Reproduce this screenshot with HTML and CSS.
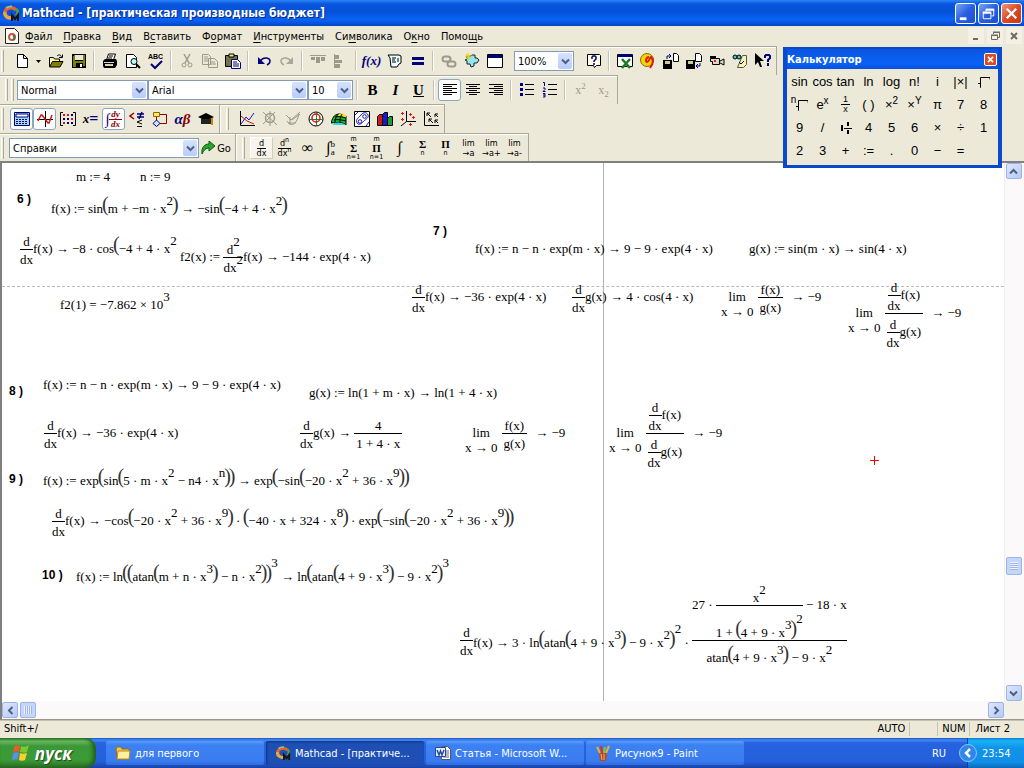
FILE: index.html
```html
<!DOCTYPE html>
<html lang="ru">
<head>
<meta charset="utf-8">
<title>Mathcad - [практическая производные бюджет]</title>
<link rel="stylesheet" href="styles.css">
</head>
<body>
<svg class="defs" aria-hidden="true">
  <symbol id="chev" viewBox="0 0 9 7"><path d="M1 1.500l3.500 3.500L8 1.500" fill="none" stroke="#4d6185" stroke-width="2"/></symbol>
  <symbol id="logo" viewBox="0 0 18 18"><path d="M3 9a6 5 0 0 1 11-3" fill="none" stroke="#e8602c" stroke-width="3.500"/><path d="M14 5a6 5 0 0 1 0 7" fill="none" stroke="#4f9a4a" stroke-width="3"/><path d="M3 8a6 5 0 0 0 7 6" fill="none" stroke="#e9a83c" stroke-width="3.500"/><path d="M4 4a7 5 0 0 1 6-1.500" fill="none" stroke="#8fc08a" stroke-width="2"/><path d="M10 17v-6l3 4 3-4v6" fill="none" stroke="#1a1210" stroke-width="2"/></symbol>
  <symbol id="disk" viewBox="0 0 16 16"><path d="M1 1h14v14H1z" fill="#000"/><path d="M3 2h1v6h8V2h2v11h-2v-3H5v4H2V3h1z" fill="#808000"/><path d="M4 2h8v5H4z" fill="#e8e6d8"/><path d="M9 11h2v3H9z" fill="#fff"/></symbol>
</svg>

<header class="titlebar">
  <svg class="app-icon"><use href="#logo"/></svg>
  <h1>Mathcad - [практическая производные бюджет]</h1>
  <div class="winbtns">
    <button aria-label="Свернуть"><svg viewBox="0 0 20 20"><path d="M4 14h7v3H4z" fill="#fff"/></svg></button>
    <button aria-label="Восстановить"><svg viewBox="0 0 20 20"><path d="M7.500 8V5.500h8v7H13M4.500 9.500h8v6h-8z" fill="none" stroke="#fff"/><path d="M7 5h9v2H7zM4 8h9v2H4z" fill="#fff"/></svg></button>
    <button class="close" aria-label="Закрыть"><svg viewBox="0 0 20 20"><path d="M5 5l10 10M15 5L5 15" stroke="#fff" stroke-width="2.500"/></svg></button>
  </div>
</header>

<nav class="menubar">
  <svg class="doc-icon" viewBox="0 0 16 18"><path d="M1.500 1.500h9l4 4v11h-13z" fill="#fff" stroke="#222"/><circle cx="8" cy="10" r="3" fill="none" stroke="#c75a3a" stroke-width="2"/><path d="M9 8a3 3 0 0 1 0 5" fill="none" stroke="#3c7a4a" stroke-width="2"/></svg>
  <button><u>Ф</u>айл</button><button><u>П</u>равка</button><button><u>В</u>ид</button><button>В<u>с</u>тавить</button><button>Ф<u>о</u>рмат</button><button><u>И</u>нструменты</button><button>Си<u>м</u>волика</button><button>О<u>к</u>но</button><button>Помо<u>щ</u>ь</button>
  <div class="mdi">
    <button aria-label="Свернуть документ"><svg viewBox="0 0 14 14"><path d="M4 9h5v2H4z" fill="#6d6a60"/></svg></button>
    <button aria-label="Восстановить документ"><svg viewBox="0 0 14 14"><path d="M5.500 5V3.500h6v5H10M3.500 6.500h6v4h-6zM3 6h7M5 3h7" fill="none" stroke="#6d6a60"/></svg></button>
    <button aria-label="Закрыть документ"><svg viewBox="0 0 14 14"><path d="M4 4l6 6M10 4l-6 6" stroke="#6d6a60" stroke-width="2"/></svg></button>
  </div>
</nav>

<div class="toolbar w1">
  <span class="grip"></span>
  <button aria-label="Создать"><svg viewBox="0 0 16 16"><path d="M3.500 1.500h6l4 4v9h-10zM9.500 1.500v4h4" fill="#fff" stroke="#000"/></svg></button>
  <button class="drop" aria-label="Шаблоны"><svg viewBox="0 0 5 5"><path d="M0 1h5L2.500 4z"/></svg></button>
  <button aria-label="Открыть"><svg viewBox="0 0 16 16"><path d="M1.500 13.500v-9h4l1 1.500h5v3" fill="#ffffa8" stroke="#000"/><path d="M1.500 14l3-5.500h10.500L12 14z" fill="#808000" stroke="#000"/><path d="M9 3c2-2 4-1 4.500 1M11 4.500h3.500V1.500" fill="none" stroke="#000"/></svg></button>
  <button aria-label="Сохранить"><svg><use href="#disk"/></svg></button>
  <span class="sep"></span>
  <button aria-label="Печать"><svg viewBox="0 0 16 16"><path d="M4.500 7l2-6h7l-2 6z" fill="#fff" stroke="#000"/><path d="M7 3h4M6 5h4" stroke="#000"/><path d="M1 8l2-2h11l1 2v4l-2 3H2l-1-2z" fill="#000"/><path d="M2 9h10v1H2zM3 11h8v2H3z" fill="#d9d6c6"/><path d="M8 11h2v1H8z" fill="#dd0"/></svg></button>
  <button aria-label="Просмотр"><svg viewBox="0 0 16 16"><path d="M1.500 14.500v-13h7l3 3v10z" fill="#fff" stroke="#000"/><circle cx="9" cy="8.500" r="3" fill="#bff" stroke="#000"/><path d="M11 11l4 4" stroke="#000" stroke-width="2"/></svg></button>
  <button class="abc" aria-label="Орфография"><span>ABC</span><svg viewBox="0 0 16 10"><path d="M3 4l4 4 7-7" fill="none" stroke="#00007b" stroke-width="2"/></svg></button>
  <span class="sep"></span>
  <button aria-label="Вырезать"><svg viewBox="0 0 16 16"><path d="M5 1l5 9M11 1L6 10" stroke="#9d9a8c" stroke-width="1.500"/><circle cx="5" cy="12" r="2" fill="none" stroke="#9d9a8c"/><circle cx="11" cy="12" r="2" fill="none" stroke="#9d9a8c"/></svg></button>
  <button aria-label="Копировать"><svg viewBox="0 0 16 16"><path d="M.5 1.500h6l2 2v8h-8zM6.500 5.500h6l3 3v6h-9z" fill="#ece9d8" stroke="#9d9a8c"/><path d="M2 4h4M2 6h4M2 8h4M8 9h5M8 11h6" stroke="#9d9a8c"/></svg></button>
  <button aria-label="Вставить"><svg viewBox="0 0 16 16"><path d="M.5 2.500h12v11H.5z" fill="#77743f" stroke="#000"/><path d="M4 1h5v3H4z" fill="#ee8" stroke="#000"/><path d="M6.500 6.500h6l3 3v6h-9z" fill="#fff" stroke="#00007b"/><path d="M8 9h4M8 11h6M8 13h6" stroke="#00007b"/></svg></button>
  <span class="sep"></span>
  <button aria-label="Отменить"><svg viewBox="0 0 16 16"><path d="M4 8c4-5 10-3 10 0 0 2-1 3-3 4" fill="none" stroke="#00007b" stroke-width="1.500"/><path d="M2 4v7h7z" fill="#00007b"/></svg></button>
  <button aria-label="Вернуть"><svg viewBox="0 0 16 16"><path d="M12 8C8 3 2 5 2 8c0 2 1 3 3 4" fill="none" stroke="#aaa79a" stroke-width="1.500"/><path d="M14 4v7H7z" fill="#aaa79a"/></svg></button>
  <span class="sep"></span>
  <button aria-label="Выровнять по горизонтали"><svg viewBox="0 0 16 16"><path d="M0 2h16v1H0zM1 4h4v3H1zM6 4h4v6H6zM11 4h4v4h-4z" fill="#9d9a8c"/></svg></button>
  <button aria-label="Выровнять по вертикали"><svg viewBox="0 0 16 16"><path d="M1 1v14h1V1zM2 2h4v4H2zM2 7h7v3H2zM2 11h5v4H2z" fill="#9d9a8c"/></svg></button>
  <span class="sep"></span>
  <button class="glyph fx" aria-label="Вставить функцию">f(x)</button>
  <button aria-label="Единицы"><svg viewBox="0 0 16 16"><path d="M1 2h11l2 1v7l-2 1-2 3H4L3 5z" fill="#e8ffff" stroke="#000"/><path d="M11 5v4M5 5h4M5 7h3M5 9h4" fill="none" stroke="#000"/></svg></button>
  <button aria-label="Вычислить"><svg viewBox="0 0 16 16"><path d="M2 4h12v3H2zM2 9h12v3H2z" fill="#00007b"/></svg></button>
  <span class="sep"></span>
  <button aria-label="Гиперссылка"><svg viewBox="0 0 16 16"><rect x="1.500" y="3.500" width="8" height="5" rx="2.500" fill="none" stroke="#9d9a8c" stroke-width="2"/><rect x="6.500" y="8.500" width="8" height="5" rx="2.500" fill="none" stroke="#9d9a8c" stroke-width="2"/></svg></button>
  <button aria-label="Компонент"><svg viewBox="0 0 16 16"><path d="M3 3h4l1-1h3v3h2l2 2-2 3h-3v3l-3 1-1-3H3V8L1 7l2-1z" fill="#8fe6ee" stroke="#222"/><path d="M4 0v7M1 3h7M2 1l5 5M7 1L2 6" stroke="#e8d21c"/></svg></button>
  <button aria-label="Вставить объект"><svg viewBox="0 0 16 16"><path d="M.5 1.500h15v13H.5z" fill="#fff" stroke="#000"/><path d="M1 2h14v3H1z" fill="#00007b"/></svg></button>
  <label class="combo zoom"><select aria-label="Масштаб"><option>100%</option></select><span><svg><use href="#chev"/></svg></span></label>
  <button aria-label="Справка"><svg viewBox="0 0 16 16"><path d="M1.500 1.500h12l1 1v10h-4l-2 2-1-2h-6z" fill="#ffffe8" stroke="#000"/><path d="M6 6V4l1-1h2l1 1v2L8 8v1M8 10v2" fill="none" stroke="#00007b" stroke-width="1.500"/></svg></button>
  <span class="sep"></span>
  <button aria-label="Excel"><svg viewBox="0 0 16 16"><path d="M.5 1.500h15v12H.5z" fill="#fff" stroke="#000"/><path d="M1 1h14v3H1z" fill="#00007b"/><path d="M5 6l8 9M13 6l-8 9" stroke="#1a7a22" stroke-width="2.500"/></svg></button>
  <button aria-label="Axum"><svg viewBox="0 0 16 16"><circle cx="7" cy="7" r="6.500" fill="#f6d400" stroke="#8a6a00"/><path d="M9 4c-3 0-4 5-2 5s3-5 4-5c3 3 2 7-1 11" fill="none" stroke="#e01818" stroke-width="2"/></svg></button>
  <button aria-label="Чтение файла"><svg viewBox="0 0 16 16"><path d="M0 7h9v9H0z" fill="#000"/><path d="M2 8h5v3H2z" fill="#cc9"/><path d="M10.500.5h3l2 2v6h-5z" fill="#fff" stroke="#000"/><path d="M4 6V3h4M6 1l2 2-2 2" fill="none" stroke="#00007b"/></svg></button>
  <button aria-label="Запись файла"><svg viewBox="0 0 16 16"><path d="M0 7h9v9H0z" fill="#000"/><path d="M2 8h5v3H2z" fill="#cc9"/><path d="M9.500.5h4l2 2v6h-6z" fill="#fff" stroke="#000"/><path d="M14 10v3h-4M12 11l-2 2 2 2" fill="none" stroke="#00007b"/></svg></button>
  <button aria-label="Анимация"><svg viewBox="0 0 16 16"><path d="M1.500 5.500h9v6h-7v-3h-2zM11 8l4-2v6l-4-2" fill="#ddd9c4" stroke="#000"/><path d="M1 4h6" stroke="#000" stroke-width="2"/><path d="M5 7h2v2H5z" fill="#d22"/></svg></button>
  <button aria-label="Проверка"><svg viewBox="0 0 16 16"><path d="M5.500 14.500l5-12h4v9l-3 3z" fill="#f8f3b0" stroke="#555"/><circle cx="3" cy="4" r="2" fill="#4cc" stroke="#000"/><circle cx="7" cy="4" r="2" fill="#4cc" stroke="#000"/><path d="M7 9l2 2 3-3" fill="none" stroke="#000"/></svg></button>
  <button aria-label="Контекстная справка"><svg viewBox="0 0 16 16"><path d="M0 0v12l3-3 2 5h2L5 8h4z" fill="#000"/><path d="M10 5V3l1-1h3l1 1v2l-2 2v2M13 10v3" fill="none" stroke="#00007b" stroke-width="2"/></svg></button>
</div>

<div class="toolbar w2">
  <span class="grip"></span><span class="grip"></span>
  <label class="combo style"><select aria-label="Стиль"><option>Normal</option></select><span><svg><use href="#chev"/></svg></span></label>
  <label class="combo font"><select aria-label="Шрифт"><option>Arial</option></select><span><svg><use href="#chev"/></svg></span></label>
  <label class="combo size"><select aria-label="Размер"><option>10</option></select><span><svg><use href="#chev"/></svg></span></label>
  <span class="sep"></span>
  <button class="glyph"><strong>B</strong></button><button class="glyph"><i>I</i></button><button class="glyph"><u>U</u></button>
  <span class="sep"></span>
  <button class="on" aria-label="Влево"><svg viewBox="0 0 16 16"><path d="M1 2.500h14M1 4.500h9M1 6.500h14M1 8.500h9M1 10.500h14M1 12.500h9" stroke="#000"/></svg></button>
  <button aria-label="По центру"><svg viewBox="0 0 16 16"><path d="M1 2.500h14M4 4.500h8M1 6.500h14M4 8.500h8M1 10.500h14M4 12.500h8" stroke="#000"/></svg></button>
  <button aria-label="Вправо"><svg viewBox="0 0 16 16"><path d="M1 2.500h14M6 4.500h9M1 6.500h14M6 8.500h9M1 10.500h14M6 12.500h9" stroke="#000"/></svg></button>
  <span class="sep"></span>
  <button aria-label="Маркеры"><svg viewBox="0 0 16 16"><path d="M6 2.500h9M6 7.500h9M6 12.500h9" stroke="#000"/><path d="M1 1h3v3H1zM1 6h3v3H1zM1 11h3v3H1z" fill="#00007b"/></svg></button>
  <button aria-label="Нумерация"><svg viewBox="0 0 16 16"><path d="M6 2.500h9M6 7.500h9M6 12.500h9" stroke="#000"/><path d="M1 .5h1.500V4M1 6h2v1.500l-2 2h2.500M1 11.500h2v3.500H1M1 13h2" fill="none" stroke="#00007b"/></svg></button>
  <span class="sep"></span>
  <button class="glyph dim">x<sup>2</sup></button><button class="glyph dim">x<sub>2</sub></button>
</div>

<div class="toolbar w3">
  <span class="grip"></span>
  <button class="on" aria-label="Калькулятор"><svg viewBox="0 0 16 16"><path d="M.5 1.500h15v13H.5z" fill="#9fdcec" stroke="#00007b"/><path d="M2 3h12v3H2z" fill="#fff" stroke="#00007b"/><path d="M2 8.500h12M2 10.500h12M2 12.500h12" stroke="#00007b" stroke-dasharray="2 1"/></svg></button>
  <button class="on" aria-label="График"><svg viewBox="0 0 16 16"><path d="M0 8.500h16M8.500 0v16" stroke="#000"/><path d="M1 10l3-6h1l6 8h1l3-8" fill="none" stroke="#d01818" stroke-width="1.500"/></svg></button>
  <button aria-label="Матрица"><svg viewBox="0 0 16 16"><path d="M3 1.500H.5v13H3M13 1.500h2.500v13H13" fill="none" stroke="#000"/><path d="M3 3h2v2H3zM7 3h2v2H7zM11 7h2v2h-2zM3 11h2v2H3z" fill="#d01818"/><path d="M11 3h2v2h-2zM3 7h2v2H3zM7 7h2v2H7zM7 11h2v2H7zM11 11h2v2h-2z" fill="#00007b"/></svg></button>
  <button class="glyph eq"><i>x</i><strong>=</strong></button>
  <button class="on calc" aria-label="Матанализ"><span>∫</span><span class="mini red"><i>dy</i><i>dx</i></span></button>
  <button aria-label="Логика"><svg viewBox="0 0 16 16"><path d="M5 2L1 5l4 3" fill="none" stroke="#8b0000" stroke-width="1.500"/><path d="M8 3h7M8 6h7M13 1l-3 7" stroke="#00007b" stroke-width="1.500"/><path d="M13 9l-5 2 5 2M8 15.500h5" fill="none" stroke="#000"/></svg></button>
  <button aria-label="Программирование"><svg viewBox="0 0 16 16"><path d="M1.500 1.500h6v4h-6z" fill="#ffe86a" stroke="#8a6a00"/><path d="M4.500 6v4M8 3.500h6.500v9H8" fill="none" stroke="#8b0000"/><path d="M4.500 9l3.500 3.500-3.500 3-3.500-3z" fill="#cfe4ff" stroke="#00007b"/></svg></button>
  <button class="glyph ab"><i>α</i><i>β</i></button>
  <button aria-label="Символика"><svg viewBox="0 0 16 16"><path d="M8 2l8 4-8 4-8-4z" fill="#000"/><path d="M3 8v5h10V8" fill="#222"/><path d="M14 7v7" stroke="#ca8a00" stroke-width="2"/></svg></button>
  <span class="edge"></span><span class="grip"></span>
  <button aria-label="X-Y график"><svg viewBox="0 0 16 16"><path d="M1.500 0v14.500H16" fill="none" stroke="#000"/><path d="M2 13L7 6l3 3 5-7" fill="none" stroke="#1818c0"/><path d="M2 5l6 5 7 3" fill="none" stroke="#d01818"/></svg></button>
  <button aria-label="Масштаб графика"><svg viewBox="0 0 16 16"><circle cx="8" cy="7" r="4.500" fill="none" stroke="#9d9a8c" stroke-width="1.500"/><path d="M1 1l14 13M1 13L13 1M8 0v15" stroke="#9d9a8c"/></svg></button>
  <button aria-label="Трассировка"><svg viewBox="0 0 16 16"><path d="M1 4l5 5 9-8M2 10c4 6 9 5 12-7M7 9l8-6M5 6v8M3 12h8" fill="none" stroke="#9d9a8c"/></svg></button>
  <button aria-label="Полярный график"><svg viewBox="0 0 16 16"><circle cx="8" cy="8" r="7" fill="#fff" stroke="#000"/><path d="M1 8.500h14M8.500 1v14" stroke="#1a8a1a"/><circle cx="8" cy="7" r="4" fill="none" stroke="#d01818" stroke-width="1.500"/></svg></button>
  <button aria-label="Поверхность"><svg viewBox="0 0 16 16"><path d="M0 12c2-7 4-9 9-9l6 2v9c-3-3-8-3-15-2z" fill="#18b830" stroke="#000"/><path d="M6 5c3-3 5-3 9-1v3c-4-2-6-2-10-2z" fill="#f2e12a"/><path d="M3 12c4-1 8-1 12 2H2z" fill="#28d8e8"/><path d="M4 6c4-1 7 0 11 1M3 9c4-1 8 0 12 1M7 3c-2 3-3 5-3 8M11 3c-2 3-2 6-2 9" fill="none" stroke="#000"/></svg></button>
  <button aria-label="Контур"><svg viewBox="0 0 16 16"><path d="M.5.5h15v15H.5z" fill="#fff" stroke="#000"/><path d="M3 12c-2-4 2-5 4-8s6-3 7 0-2 4-4 6-5 5-7 2z" fill="none" stroke="#1818b0"/><circle cx="10.500" cy="5.500" r="1.800" fill="none" stroke="#1818b0"/><circle cx="6" cy="10.500" r="1.800" fill="none" stroke="#1818b0"/><path d="M1 4l3-3M12 15l3-4" stroke="#1818b0"/></svg></button>
  <button aria-label="Столбцы"><svg viewBox="0 0 16 16"><path d="M.5 5.500l2-2h3v11h-5z" fill="#d01818" stroke="#000"/><path d="M5.500 3.500l2-2h3v13h-5z" fill="#1818d0" stroke="#000"/><path d="M10.500 7.500l2-2h3v9h-5z" fill="#18a030" stroke="#000"/></svg></button>
  <button aria-label="Точки"><svg viewBox="0 0 16 16"><path d="M6.500 0v10.500H16M6.500 10.500L1 15" fill="none" stroke="#000"/><path d="M1 2.500h3M2.500 1v3M1 8.500h3M2.500 7v3M9 3.500h3M10.500 2v3M12 6.500h3M13.500 5v3M9 13.500h3M10.500 12v3" stroke="#e01818"/></svg></button>
  <button aria-label="Векторное поле"><svg viewBox="0 0 16 16"><path d="M1.500 0v14.500H16" fill="none" stroke="#000"/><path d="M8 6L4 2m0 3V2h3M15 6l-3-3m0 3V3h3M10 12L6 8m0 3V8h3M15 12l-3-3m0 3V9h3" fill="none" stroke="#000"/></svg></button>
</div>

<div class="toolbar w4">
  <span class="grip"></span>
  <label class="combo res"><select aria-label="Ресурсы"><option>Справки</option></select><span><svg><use href="#chev"/></svg></span></label>
  <button class="go"><svg viewBox="0 0 14 16"><path d="M1 14C0 7 4 4 8 4V1l6 5-6 5V8c-3 0-5 2-7 6z" fill="#28a52c" stroke="#0c5a12"/></svg>Go</button>
  <span class="edge"></span><span class="grip"></span>
  <button class="lift mini"><i>d</i><i>dx</i></button>
  <button class="mini"><i>d<sup>n</sup></i><i>dx<sup>n</sup></i></button>
  <button class="sym">∞</button>
  <button class="sym">∫<small class="ab2"><span>b</span><span>a</span></small></button>
  <button class="stack"><small>m</small><strong>Σ</strong><small>n=1</small></button>
  <button class="stack"><small>m</small><strong>Π</strong><small>n=1</small></button>
  <button class="sym">∫</button>
  <button class="stack"><strong>Σ</strong><small>n</small></button>
  <button class="stack"><strong>Π</strong><small>n</small></button>
  <button class="limb"><span>lim</span><span>→a</span></button>
  <button class="limb"><span>lim</span><span>→a+</span></button>
  <button class="limb"><span>lim</span><span>→a-</span></button>
</div>

<main class="workspace">
  <div class="sheet">
    <div class="pagebreak"></div><div class="margin"></div>
    <div class="r a1"><span class="t">m := 4</span></div>
    <div class="r a2"><span class="t">n := 9</span></div>
    <h2 class="n6">6 )</h2>
    <div class="r a3"><span class="t">f(x) := sin<b>(</b>m + −m · x<sup>2</sup><b>)</b> → −sin<b>(</b>−4 + 4 · x<sup>2</sup><b>)</b></span></div>
    <div class="r a4"><span class="f"><span>d</span><span>dx</span></span><span class="t">f(x) → −8 · cos<b>(</b>−4 + 4 · x<sup>2</sup></span></div>
    <div class="r a5"><span class="t">f2(x) :=&nbsp;</span><span class="f"><span>d<sup>2</sup></span><span>dx<sup>2</sup></span></span><span class="t">f(x) → −144 · exp(4 · x)</span></div>
    <div class="r a6"><span class="t">f2(1) = −7.862 × 10<sup>3</sup></span></div>

    <h2 class="n7">7 )</h2>
    <div class="r b1"><span class="t">f(x) := n − n · exp(m · x) → 9 − 9 · exp(4 · x)</span></div>
    <div class="r b2"><span class="t">g(x) := sin(m · x) → sin(4 · x)</span></div>
    <div class="r b3"><span class="f"><span>d</span><span>dx</span></span><span class="t">f(x) → −36 · exp(4 · x)</span></div>
    <div class="r b4"><span class="f"><span>d</span><span>dx</span></span><span class="t">g(x) → 4 · cos(4 · x)</span></div>
    <div class="r wide b5"><span class="lim"><span>lim</span><span>x → 0</span></span><span class="f pad"><span>f(x)</span><span>g(x)</span></span><span class="t">→ −9</span></div>
    <div class="r wide b6"><span class="lim"><span>lim</span><span>x → 0</span></span><span class="f"><span class="in"><span class="f"><span>d</span><span>dx</span></span><span class="t">f(x)</span></span><span class="in"><span class="f"><span>d</span><span>dx</span></span><span class="t">g(x)</span></span></span><span class="t">→ −9</span></div>

    <h2 class="n8">8 )</h2>
    <div class="r c1"><span class="t">f(x) := n − n · exp(m · x) → 9 − 9 · exp(4 · x)</span></div>
    <div class="r c2"><span class="t">g(x) := ln(1 + m · x) → ln(1 + 4 · x)</span></div>
    <div class="r c3"><span class="f"><span>d</span><span>dx</span></span><span class="t">f(x) → −36 · exp(4 · x)</span></div>
    <div class="r c4"><span class="f"><span>d</span><span>dx</span></span><span class="t">g(x) →&nbsp;</span><span class="f pad"><span>4</span><span>1 + 4 · x</span></span></div>
    <div class="r wide c5"><span class="lim"><span>lim</span><span>x → 0</span></span><span class="f pad"><span>f(x)</span><span>g(x)</span></span><span class="t">→ −9</span></div>
    <div class="r wide c6"><span class="lim"><span>lim</span><span>x → 0</span></span><span class="f"><span class="in"><span class="f"><span>d</span><span>dx</span></span><span class="t">f(x)</span></span><span class="in"><span class="f"><span>d</span><span>dx</span></span><span class="t">g(x)</span></span></span><span class="t">→ −9</span></div>

    <h2 class="n9">9 )</h2>
    <div class="r d1"><span class="t">f(x) := exp<b>(</b>sin<b>(</b>5 · m · x<sup>2</sup> − n4 · x<sup>n</sup><b>)</b><b>)</b> → exp<b>(</b>−sin<b>(</b>−20 · x<sup>2</sup> + 36 · x<sup>9</sup><b>)</b><b>)</b></span></div>
    <div class="r d2"><span class="f"><span>d</span><span>dx</span></span><span class="t">f(x) → −cos<b>(</b>−20 · x<sup>2</sup> + 36 · x<sup>9</sup><b>)</b> · <b>(</b>−40 · x + 324 · x<sup>8</sup><b>)</b> · exp<b>(</b>−sin<b>(</b>−20 · x<sup>2</sup> + 36 · x<sup>9</sup><b>)</b><b>)</b></span></div>

    <h2 class="n10">10 )</h2>
    <div class="r e1"><span class="t">f(x) := ln<b>(</b><b>(</b>atan<b>(</b>m + n · x<sup>3</sup><b>)</b> − n · x<sup>2</sup><b>)</b><b>)</b><sup class="hi">3</sup> → ln<b>(</b>atan<b>(</b>4 + 9 · x<sup>3</sup><b>)</b> − 9 · x<sup>2</sup><b>)</b><sup class="hi">3</sup></span></div>
    <div class="r e2"><span class="f"><span>d</span><span>dx</span></span><span class="t">f(x) → 3 · ln<b>(</b>atan<b>(</b>4 + 9 · x<sup>3</sup><b>)</b> − 9 · x<sup>2</sup><b>)</b><sup class="hi">2</sup> ·&nbsp;</span><span class="f"><span class="in"><span class="t">27 ·&nbsp;</span><span class="f tall"><span>x<sup>2</sup></span><span>1 + <b>(</b>4 + 9 · x<sup>3</sup><b>)</b><sup class="hi">2</sup></span></span><span class="t">&nbsp;− 18 · x</span></span><span class="deep">atan<b>(</b>4 + 9 · x<sup>3</sup><b>)</b> − 9 · x<sup>2</sup></span></span></div>
    <svg class="cross" viewBox="0 0 9 9"><path d="M0 4.500h9M4.500 0v9" stroke="#f00"/></svg>
  </div>
  <div class="vscroll">
    <button aria-label="Вверх"><svg class="up"><use href="#chev"/></svg></button>
    <span class="thumb"></span>
    <button aria-label="Вниз"><svg><use href="#chev"/></svg></button>
  </div>
  <div class="hscroll">
    <button aria-label="Влево"><svg class="left"><use href="#chev"/></svg></button>
    <span class="thumb"></span>
    <button aria-label="Вправо"><svg class="right"><use href="#chev"/></svg></button>
  </div>
  <div class="corner"></div>
</main>

<footer class="status"><span class="msg">Shift+/</span><span>AUTO</span><span class="blank"></span><span>NUM</span><span class="page">Лист 2</span></footer>

<div class="taskbar">
  <button class="start"><svg viewBox="0 0 20 20"><path d="M3 4c2-2 4-2 6-1L8 9c-2-1-4-1-6 1z" fill="#f0582a"/><path d="M10 3c2 1 5 1 8-1l-2 7c-2 1-4 1-7 0z" fill="#7cc832"/><path d="M2 11c2-2 4-2 6-1l-2 7c-1-1-3-1-5 1z" fill="#5b8df4"/><path d="M9 10c2 1 4 1 7 0l-2 7c-2 1-4 1-6 0z" fill="#fbd02c"/></svg>пуск</button>
  <div class="tasks">
    <button><svg viewBox="0 0 16 16"><path d="M1 4l1-2h4l1 2h7v10H2z" fill="#f0c84a" stroke="#9a6a10"/><path d="M3 6h12l-1 8H2z" fill="#fff0a0" stroke="#b88a20"/></svg><span>для первого</span></button>
    <button class="active"><svg><use href="#logo"/></svg><span>Mathcad - [практиче...</span></button>
    <button><svg viewBox="0 0 16 16"><path d="M6.500 1.500h6l3 3v10h-9z" fill="#fff" stroke="#556"/><path d="M8 6h6M8 8h6M8 10h6M8 12h6" stroke="#668"/><path d="M.5 2.500h10v9H.5z" fill="#e8eeff" stroke="#234a9a"/><path d="M2 5l2 5 1.500-4L7 10l2-5" fill="none" stroke="#234a9a" stroke-width="1.500"/></svg><span>Статья - Microsoft W...</span></button>
    <button><svg viewBox="0 0 16 16"><path d="M4 8h8l-1 8H5z" fill="#b84a20"/><path d="M5 8L2 2M11 8l3-7" stroke="#e8b030" stroke-width="2"/><path d="M7 8L6 1" stroke="#e03020" stroke-width="2"/><path d="M9 8l1-6" stroke="#7cc840" stroke-width="2"/><path d="M6 9l1 6M9 9v6" stroke="#f0b070"/></svg><span>Рисунок9 - Paint</span></button>
  </div>
  <span class="lang">RU</span>
  <div class="tray"><button aria-label="Скрытые значки"><svg viewBox="0 0 18 18"><circle cx="9" cy="9" r="8.500" fill="#2f86ec" stroke="#8cc6ff"/><path d="M11 5L7 9l4 4" fill="none" stroke="#fff" stroke-width="2.500"/></svg></button><time>23:54</time></div>
</div>

<section class="palette" aria-label="Калькулятор">
  <div class="ptitle"><h2>Калькулятор</h2><button aria-label="Закрыть"><svg viewBox="0 0 13 13"><path d="M3.500 3.500l6 6M9.500 3.500l-6 6" stroke="#fff" stroke-width="2"/></svg></button></div>
  <div class="keys">
    <button>sin</button><button>cos</button><button>tan</button><button>ln</button><button>log</button><button>n!</button><button>i</button><button>|×|</button><button aria-label="корень"><svg viewBox="0 0 12 14"><path d="M0 8.500h2.500v4V2.500H12v2" fill="none" stroke="#000"/></svg></button>
    <button class="root"><sup>n</sup><svg viewBox="0 0 12 14"><path d="M0 8.500h2.500v4V2.500H12v2" fill="none" stroke="#000"/></svg></button><button class="pow">e<sup>x</sup></button><button class="mini"><i>1</i><i>x</i></button><button>( )</button><button class="pow">×<sup>2</sup></button><button class="pow">×<sup>Y</sup></button><button>π</button><button>7</button><button>8</button>
    <button>9</button><button>/</button><button aria-label="смешанное число"><svg viewBox="0 0 12 12"><path d="M2 3v6M8 0v4M8 8v4" stroke="#000" stroke-width="2"/><path d="M4 6.500h8" stroke="#000"/></svg></button><button>4</button><button>5</button><button>6</button><button>×</button><button>÷</button><button>1</button>
    <button>2</button><button>3</button><button>+</button><button>:=</button><button>.</button><button>0</button><button>−</button><button>=</button>
  </div>
</section>
</body>
</html>
```
FILE: styles.css
```css
* { box-sizing: border-box; }
body {
  margin: 0; min-height: 100vh; display: flex; flex-direction: column; position: relative;
  background: #ece9d8; color: #000; overflow: hidden;
  font: 11px "DejaVu Sans Condensed", "Noto Sans", sans-serif;
}
.defs { position: absolute; width: 0; height: 0; }
button { font: inherit; color: inherit; border: 0; background: none; padding: 0; margin: 0; display: flex; align-items: center; justify-content: center; white-space: nowrap; }
h1, h2 { margin: 0; }

/* title and menu */
.titlebar { height: 26px; display: flex; align-items: center; padding: 0 2px; gap: 2px; background: linear-gradient(#2a86f8 0, #0a55de 4px, #0452d8 12px, #0a62f6 20px, #0446c4 26px); }
.titlebar h1 { flex: 1; font-size: 12px; color: #fff; text-shadow: 1px 1px #0a2a80; white-space: nowrap; }
.app-icon { width: 18px; height: 18px; }
.winbtns { display: flex; gap: 2px; }
.winbtns button { width: 21px; height: 21px; border: 1px solid #fff; border-radius: 3px; background: linear-gradient(135deg, #7ba7f4, #2a5ee0 50%, #1d4fd0); }
.winbtns .close { background: linear-gradient(135deg, #f0987c, #dc4a24 50%, #c43a14); }
.winbtns svg { width: 19px; height: 19px; }
.menubar { height: 20px; display: flex; align-items: center; padding-left: 4px; }
.menubar > button { padding: 0 6px 0 5px; height: 18px; }
.menubar > button u { text-underline-offset: 2px; }
.doc-icon { width: 16px; height: 18px; }
.mdi { margin-left: auto; display: flex; gap: 3px; padding-right: 2px; }
.mdi button { width: 16px; height: 16px; background: #f3f1e6; }
.mdi svg { width: 14px; height: 14px; }

/* toolbars */
.toolbar { height: 29px; display: flex; align-items: center; align-self: flex-start; border-top: 1px solid #aca899; border-right: 1px solid #aca899; box-shadow: inset 0 1px #fff; padding: 0 2px 0 1px; }
.toolbar.w2 { padding-left: 5px; }
.toolbar button { width: 23px; height: 22px; flex: none; }
.toolbar svg { width: 16px; height: 16px; flex: none; }
.toolbar .drop { width: 11px; }
.toolbar .drop svg { width: 5px; height: 5px; }
.grip { width: 3px; height: 22px; border-left: 1px solid #fff; border-right: 1px solid #aca899; margin-right: 6px; }
.w2 .grip { margin-right: 3px; }
.w4 .grip { margin-right: 5px; }
.sep { width: 8px; height: 20px; background: linear-gradient(90deg, transparent 3px, #c5c2b2 3px, #c5c2b2 4px, #fff 4px, #fff 5px, transparent 5px); }
.edge { width: 9px; height: 28px; background: linear-gradient(90deg, transparent 2px, #aca899 2px, #aca899 3px, #fff 3px, #fff 4px, transparent 4px); }
.toolbar .on { background: #fff; border: 1px solid #8ba7bf; border-radius: 3px; }
.toolbar .lift { background: #f6f4ec; border: 1px solid #fff; border-right-color: #d0cdbd; border-bottom-color: #d0cdbd; }
.combo { display: grid; height: 20px; flex: none; border: 1px solid #7f9db9; background: #fff; grid-template-columns: 1fr 16px; }
.combo select { grid-area: 1 / 1 / 2 / 3; min-width: 0; appearance: none; border: 0; background: none; font: inherit; color: #000; padding: 0 3px; margin: 0; }
.combo span { grid-area: 1 / 2; margin: 1px; border-radius: 2px; background: linear-gradient(#d6e2fd, #b9ccf8); pointer-events: none; display: flex; align-items: center; justify-content: center; }
.combo svg { width: 9px; height: 7px; }
.zoom { width: 60px; margin: 0 8px; }
.style { width: 131px; }
.font { width: 160px; }
.size { width: 45px; }
.res { width: 190px; }
.glyph { font-family: "Liberation Serif", serif; font-size: 15px; font-weight: bold; }
.fx { color: #00007b; font-size: 13px; font-style: italic; }
.eq { font-size: 13px; }
.eq strong { color: #00007b; font-size: 16px; }
.ab i:first-child { color: #00007b; }
.ab i:last-child { color: #8b0000; }
.toolbar .dim { display: block; color: #9d9a8c; font-size: 12px; font-weight: normal; }
.dim sup, .dim sub { font-size: 9px; line-height: 0; }
.abc { flex-direction: column; font: bold 7px "Liberation Sans", sans-serif; }
.toolbar .abc svg { height: 10px; }
.mini { flex-direction: column; font: 9px "DejaVu Sans Condensed", sans-serif; line-height: 9px; }
.mini i { font-style: normal; }
.mini i:first-child { border-bottom: 1px solid; padding: 0 2px; }
.mini sup { font-size: 7px; line-height: 0; }
.calc { font: bold 15px "Liberation Serif", serif; color: #00007b; }
.red { display: flex; color: #8b0000; font: bold 9px "Liberation Serif", serif; line-height: 9px; }
.red i { font-style: italic; }
.sym { font: 16px "Liberation Serif", serif; }
.ab2 { display: flex; flex-direction: column; font-size: 9px; line-height: 8px; }
.stack { flex-direction: column; font: 11px "Liberation Serif", serif; line-height: 11px; }
.stack small { font: 7px "DejaVu Sans Condensed", sans-serif; line-height: 7px; }
.limb { flex-direction: column; font: 9px "DejaVu Sans Condensed", sans-serif; line-height: 10px; }
.toolbar .go { width: 34px; gap: 2px; }
.toolbar .go svg { width: 14px; }

/* worksheet */
.workspace { flex: 1; min-height: 0; display: grid; grid-template: 1fr 18px / 1fr 20px; border: 2px solid #808080; border-right: 0; border-bottom: 1px solid #9a978a; margin-top: -1px; background: #fff; }
.sheet { position: relative; overflow: hidden; background: #fff; font: 13px "Liberation Serif", serif; white-space: nowrap; }
.margin { position: absolute; left: 601px; top: 0; bottom: 0; border-left: 1px solid #b4b0bc; }
.pagebreak { position: absolute; left: 0; right: 0; top: 123px; border-top: 1px dashed #bcb6c2; }
.cross { position: absolute; left: 868px; top: 293px; width: 9px; height: 9px; }
.sheet h2 { position: absolute; font: bold 12px "Liberation Sans", sans-serif; line-height: 16px; }
.r { position: absolute; height: 1px; display: flex; align-items: center; }
.t { display: block; line-height: 15px; padding-bottom: 2px; }
.sheet sup { font-size: inherit; line-height: 0; vertical-align: 8px; }
.sheet sup.hi { vertical-align: 14px; }
.sheet b { font-weight: normal; font-size: 20px; line-height: 0; vertical-align: 2px; margin: 0 -1px; color: #333; }
.f { display: inline-grid; grid-template-rows: 1fr 1fr; text-align: center; }
.f > span { line-height: 15px; }
.f > span:first-child { align-self: end; border-bottom: 1px solid #000; justify-self: stretch; }
.f > span:last-child { padding-top: 2px; }
.f.pad > span { padding-left: 2px; padding-right: 2px; }
.f > .in { display: flex; align-items: center; justify-content: center; }
.wide .in { padding: 0 2px; }
.f > span.deep { padding-top: 9px; }
.tall > span:last-child { padding-top: 13px; }
.lim { display: flex; flex-direction: column; align-items: center; padding-top: 13px; line-height: 15px; }
.wide { gap: 4px; }
.wide > .t:last-child { margin-left: 4px; }
.a1 { left: 74px; top: 14px; } .a2 { left: 138px; top: 14px; }
.a3 { left: 49px; top: 46px; } .a4 { left: 18px; top: 86px; }
.a5 { left: 178px; top: 94px; } .a6 { left: 58px; top: 142px; }
.b1 { left: 473px; top: 86px; } .b2 { left: 747px; top: 86px; }
.b3 { left: 410px; top: 134px; } .b4 { left: 570px; top: 134px; }
.b5 { left: 719px; top: 134px; } .b6 { left: 846px; top: 150px; }
.c1 { left: 41px; top: 222px; } .c2 { left: 307px; top: 230px; }
.c3 { left: 42px; top: 270px; } .c4 { left: 298px; top: 270px; }
.c5 { left: 463px; top: 270px; } .c6 { left: 607px; top: 270px; }
.d1 { left: 41px; top: 318px; } .d2 { left: 50px; top: 358px; }
.e1 { left: 74px; top: 411px; } .e2 { left: 458px; top: 477px; }
.n6 { left: 15px; top: 28px; } .n7 { left: 431px; top: 60px; } .n8 { left: 7px; top: 220px; }
.n9 { left: 7px; top: 308px; } .n10 { left: 40px; top: 404px; }

/* scroll bars */
.vscroll, .hscroll { display: flex; background: #fbf9fa; }
.vscroll { flex-direction: column; align-items: center; justify-content: space-between; border-left: 1px solid #f0eef0; padding-right: 2px; }
.hscroll { align-items: center; justify-content: space-between; grid-column: 1; }
.corner { background: #f4f2e8; }
.vscroll button, .hscroll button, .thumb { width: 16px; height: 16px; flex: none; border: 1px solid #9db4e8; border-radius: 2px; background: linear-gradient(135deg, #dce6fe, #b7caf5); }
.vscroll svg, .hscroll svg { width: 9px; height: 7px; }
.up { transform: rotate(180deg); } .left { transform: rotate(90deg); } .right { transform: rotate(-90deg); }
.vscroll .thumb { margin-top: auto; margin-bottom: 110px; height: 18px; background: repeating-linear-gradient(#eef4fe 0 1px, #9db4e8 1px 2px) center / 8px 8px no-repeat, #c6d6fb; }
.hscroll .thumb { margin-right: auto; margin-left: 2px; background: repeating-linear-gradient(90deg, #eef4fe 0 1px, #9db4e8 1px 2px) center / 8px 8px no-repeat, #c6d6fb; }

/* status bar */
.status { height: 18px; display: flex; align-items: center; padding: 0 14px 0 4px; box-shadow: inset 0 1px #c5c2b2; }
.status span { padding: 0 4px; border-right: 1px solid #c5c2b2; line-height: 14px; height: 14px; }
.status .msg { flex: 1; padding: 0; border: 0; }
.status .blank { width: 28px; }
.status .page { border: 0; padding: 0 0 0 5px; }

/* taskbar */
.taskbar { height: 30px; display: flex; align-items: stretch; color: #fff; background: linear-gradient(#1f4fbe 0, #3f8cf3 2px, #2663e0 5px, #245edb 24px, #1941a5 30px); }
.start { width: 96px; gap: 4px; padding-right: 24px; justify-content: flex-end; border-radius: 0 10px 10px 0; background: linear-gradient(#2f7d2c 0, #6dbb62 3px, #3a9838 8px, #3c9a36 22px, #2a6e26 30px); box-shadow: inset -3px 0 4px #1f5c1e; font: italic bold 17px "Open Sans", sans-serif; text-shadow: 1px 1px 1px #1c4a1a; }
.start svg { width: 20px; height: 20px; }
.tasks { flex: 1; display: flex; gap: 2px; padding: 3px 0 3px 10px; }
.tasks button { flex: 0 1 158px; min-width: 0; justify-content: flex-start; gap: 4px; padding: 0 9px; border-radius: 2px; background: linear-gradient(#5a9bfb 0, #3c81f3 4px, #3a7cf0 20px, #2f6be0); }
.tasks .active { background: #1e4fb4; box-shadow: inset 1px 1px 2px #12347e; }
.tasks svg { width: 16px; height: 16px; flex: none; }
.tasks span { overflow: hidden; }
.lang { align-self: center; padding-right: 21px; }
.tray { display: flex; align-items: center; gap: 5px; width: 57px; border-left: 1px solid #0c3c9c; background: linear-gradient(#0d7fd8 0, #18b4f4 3px, #1192ea 10px, #118fe8 24px, #0c68b8 30px); }
.tray button { width: 18px; height: 18px; margin-left: -9px; }
.tray svg { width: 18px; height: 18px; }

/* calculator palette */
.palette { position: absolute; right: 22px; top: 47px; width: 219px; height: 121px; background: #ece9d8; border: 3px solid #0a48cc; border-width: 2px 4px 3px; }
.ptitle { height: 20px; display: flex; align-items: center; justify-content: space-between; background: linear-gradient(#0a55de, #0a62f6 70%, #0a50dc); color: #fff; padding-right: 1px; }
.ptitle h2 { font-size: 11px; }
.ptitle button { width: 13px; height: 13px; border: 1px solid #fff; border-radius: 2px; background: #dc4a24; }
.ptitle svg { width: 13px; height: 13px; }
.keys { display: grid; grid-template-columns: repeat(9, 23px); grid-auto-rows: 23px; padding: 1px; font: 13px "Liberation Sans", sans-serif; }
.keys sup { font-size: 10px; line-height: 0; vertical-align: 5px; }
.keys .pow { display: block; }
.keys .mini { font: 9px "Liberation Sans", sans-serif; line-height: 9px; }
.keys svg { width: 12px; height: 14px; flex: none; }
.keys .root sup { align-self: flex-start; line-height: 14px; }
```
